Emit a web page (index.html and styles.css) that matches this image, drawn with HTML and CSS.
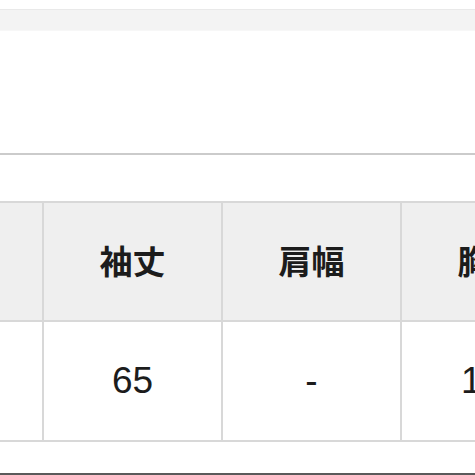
FILE: index.html
```html
<!DOCTYPE html>
<html lang="ja">
<head>
<meta charset="utf-8">
<link rel="stylesheet" href="styles.css">
</head>
<body>
<div class="page">
  <div class="top-gap"></div>
  <div class="band"></div>
  <div class="panel"></div>
  <div class="rule"></div>
  <div class="table-wrap">
    <table class="size-table">
      <thead>
        <tr>
          <th>着丈</th>
          <th>袖丈</th>
          <th>肩幅</th>
          <th>胸囲</th>
        </tr>
      </thead>
      <tbody>
        <tr>
          <td>70</td>
          <td>65</td>
          <td>-</td>
          <td>110</td>
        </tr>
      </tbody>
    </table>
  </div>
  <div class="bottom-rule"></div>
</div>
</body>
</html>
```

FILE: styles.css
```css
html, body {
  margin: 0;
  padding: 0;
  background: #ffffff;
}

.page {
  width: 475px;
  height: 475px;
  overflow: hidden;
  display: flex;
  flex-direction: column;
}

.top-gap {
  height: 9px;
  flex: none;
}

.band {
  height: 20px;
  flex: none;
  background: #f3f3f3;
  border-top: 1px solid #e9e9e9;
  border-bottom: 1px solid #f7f7f7;
}

.panel {
  height: 122px;
  flex: none;
}

.rule {
  height: 2px;
  flex: none;
  background: #cbcbcb;
}

.table-wrap {
  flex: none;
  width: 720px;
  padding-top: 46px;
  margin-left: -137px;
}

.size-table {
  width: 718px;
  table-layout: fixed;
  border-collapse: collapse;
  font-family: "Liberation Sans", "Noto Sans CJK JP", sans-serif;
  color: #1c1c1c;
}

.size-table th,
.size-table td {
  border: 2px solid #d8d8d8;
  text-align: center;
  vertical-align: middle;
  white-space: nowrap;
}

.size-table th {
  height: 113px;
  padding: 0 0 4px 0;
  background: #efefef;
  font-family: "Noto Sans CJK JP", sans-serif;
  font-weight: 700;
  font-size: 33px;
}

.size-table td {
  height: 118px;
  padding: 0;
  background: #ffffff;
  font-size: 37px;
  font-weight: 400;
}

.bottom-rule {
  flex: none;
  margin-top: 31px;
  height: 2px;
  background: #5a5a5a;
}
```
